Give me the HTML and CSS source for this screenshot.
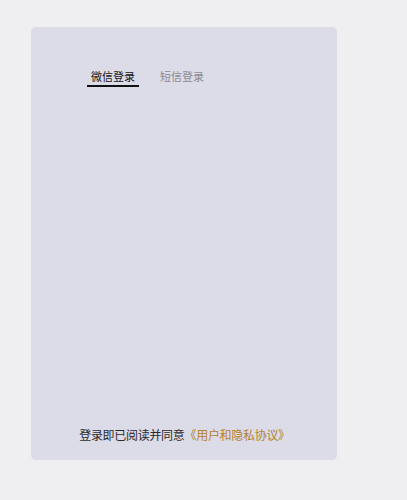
FILE: index.html
```html
<!DOCTYPE html>
<html lang="zh-CN">
<head>
<meta charset="utf-8">
<title>登录</title>
<link rel="stylesheet" href="styles.css">
</head>
<body>
<div class="card">
  <div class="tabs">
    <div class="tab active">微信登录</div>
    <div class="tab">短信登录</div>
  </div>
  <div class="content"></div>
  <div class="agreement">登录即已阅读并同意<span class="link">《用户和隐私协议》</span></div>
</div>
</body>
</html>
```

FILE: styles.css
```css
html, body {
  margin: 0;
  padding: 0;
}
body {
  background: #efeff2;
  font-family: "Noto Sans CJK SC", "Noto Sans", sans-serif;
  width: 407px;
  height: 500px;
  overflow: hidden;
}
.card {
  margin: 27px 0 0 31px;
  width: 306px;
  height: 433px;
  box-sizing: border-box;
  background: #dcdbe8;
  border-radius: 5px;
  display: flex;
  flex-direction: column;
  padding: 42px 0 0 56px;
}
.tabs {
  display: flex;
  gap: 17px;
  align-items: flex-end;
}
.tab {
  font-size: 11px;
  line-height: 14px;
  padding: 0 4px 2px;
  color: #8a8a8f;
  border-bottom: 2px solid transparent;
}
.tab.active {
  color: #111;
  border-bottom-color: #111;
}
.content {
  flex: 1;
}
.agreement {
  margin-left: -56px;
  text-align: center;
  font-size: 12px;
  line-height: 18px;
  letter-spacing: -0.3px;
  color: #2a2a2a;
  padding-bottom: 16px;
  padding-left: 1px;
}
.link {
  color: #b3822a;
}
```
